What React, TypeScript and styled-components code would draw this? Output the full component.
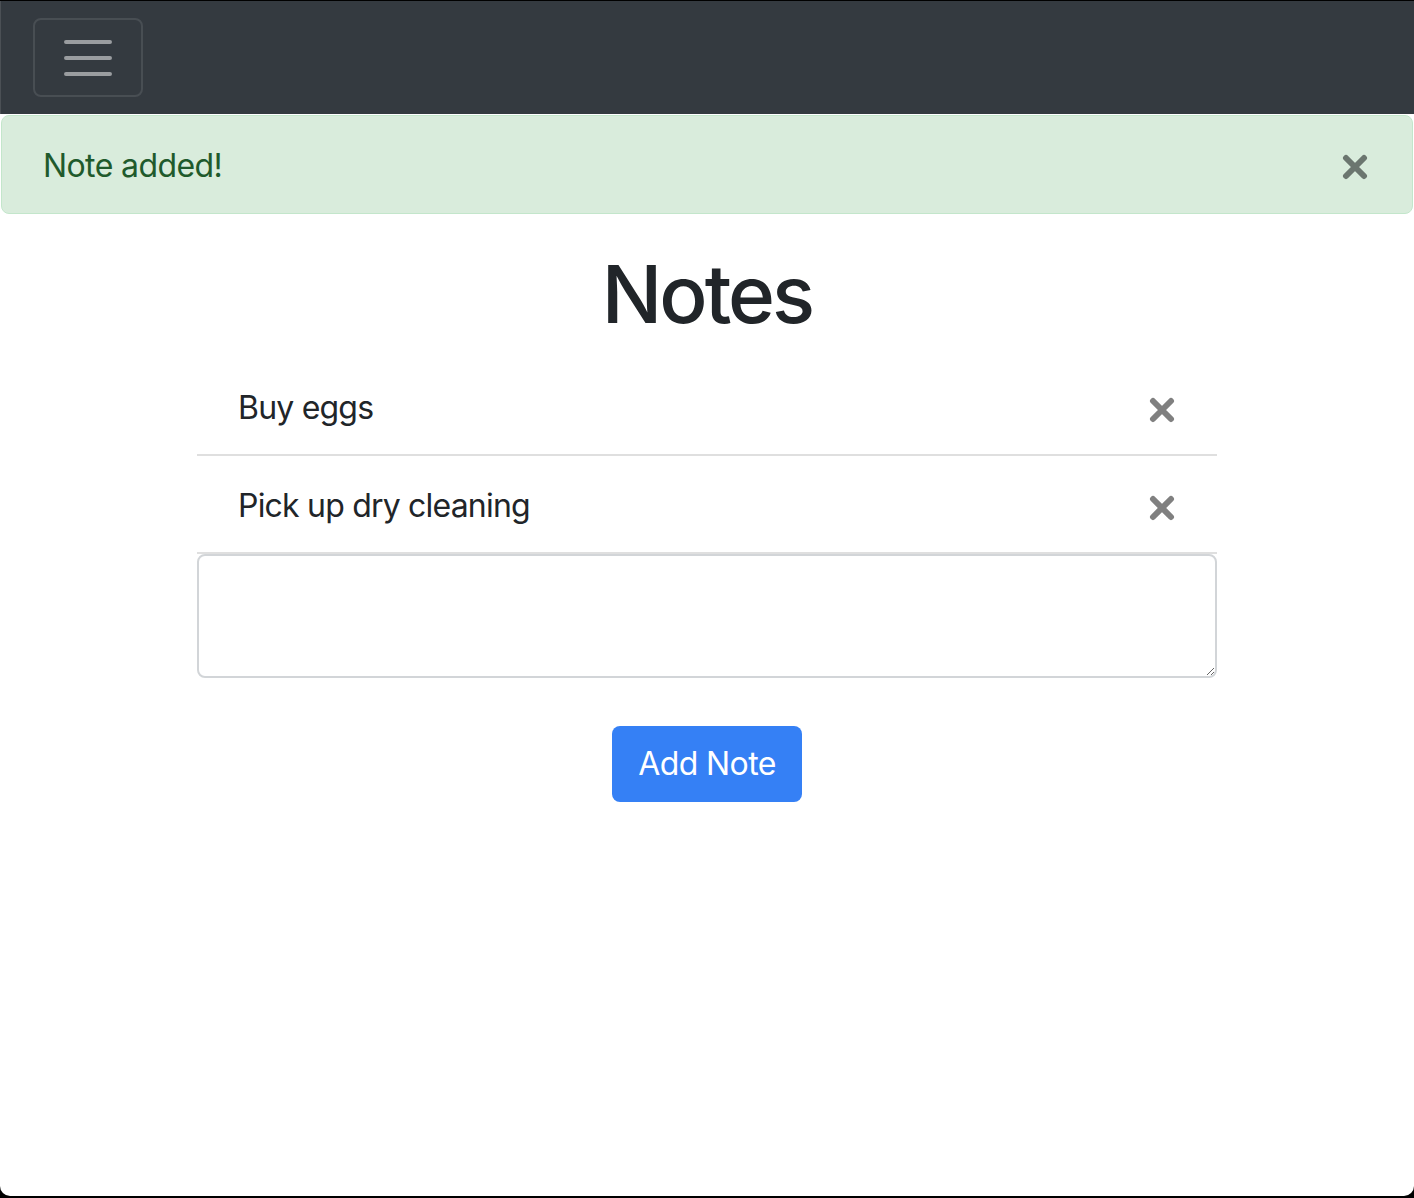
import React from "react";
import styled, { createGlobalStyle } from "styled-components";

const Global = createGlobalStyle`
  html, body { margin: 0; padding: 0; background: #000; }
  body { font-family: Inter, "Noto Sans", "Liberation Sans", sans-serif; color: #212529; }
  * { box-sizing: border-box; }
`;

const Frame = styled.div`
  margin-top: 1px;
  height: 1195px;
  background: #fff;
  border-radius: 0 0 10px 10px;
  overflow: hidden;
  display: flex;
  flex-direction: column;
`;

const Navbar = styled.nav`
  height: 113px;
  background: #343a40;
  border-left: 1px solid #4b5055;
  display: flex;
  align-items: center;
  padding: 0 32px;
`;

const Toggler = styled.button`
  width: 110px;
  height: 79px;
  background: transparent;
  border: 2px solid rgba(255, 255, 255, 0.1);
  border-radius: 8px;
  display: flex;
  align-items: center;
  justify-content: center;
  padding: 0;
  cursor: pointer;
`;

const Alert = styled.div`
  margin: 1px 1px 0 1px;
  height: 99px;
  background: #d9ecdc;
  border: 1px solid #c3e6cb;
  border-radius: 8px;
  color: #1f5a2c;
  display: flex;
  align-items: center;
  justify-content: space-between;
  padding: 3px 44px 0 41px;
  font-size: 32px;
  line-height: 48px;
  letter-spacing: -0.6px;
`;

const CloseBtn = styled.button<{ $tone: string; $shift: number }>`
  background: transparent;
  border: 0;
  padding: 0;
  margin-top: ${(p) => p.$shift}px;
  width: 26px;
  height: 26px;
  display: flex;
  align-items: center;
  justify-content: center;
  color: ${(p) => p.$tone};
  cursor: pointer;
`;

const Container = styled.main`
  width: 1020px;
  margin: 0 auto;
  display: flex;
  flex-direction: column;
`;

const Title = styled.h1`
  margin: 32px 0 16px;
  font-size: 80px;
  line-height: 96px;
  font-weight: 500;
  text-align: center;
  color: #212529;
  letter-spacing: -3px;
`;

const List = styled.ul`
  list-style: none;
  margin: 0;
  padding: 0;
`;

const Item = styled.li`
  display: flex;
  align-items: center;
  justify-content: space-between;
  height: 98px;
  padding: 4px 42px 0 41px;
  border-bottom: 2px solid #dfdfdf;
  font-size: 32px;
  line-height: 48px;
  letter-spacing: -0.8px;
  color: #212529;
`;

const TextArea = styled.textarea`
  display: block;
  width: 100%;
  height: 124px;
  border: 2px solid #d2d5d8;
  border-radius: 8px;
  font-family: inherit;
  font-size: 32px;
  padding: 12px 24px;
  outline: none;
`;

const Actions = styled.div`
  display: flex;
  justify-content: center;
  margin-top: 48px;
`;

const PrimaryButton = styled.button`
  height: 76px;
  padding: 0 26px;
  background: #3580f5;
  color: #fff;
  border: 0;
  border-radius: 8px;
  font-family: inherit;
  font-size: 32px;
  line-height: 48px;
  letter-spacing: -0.6px;
  cursor: pointer;
`;

const Cross = () => (
  <svg width="26" height="26" viewBox="0 0 26 26">
    <path d="M4 4L22 22M22 4L4 22" stroke="currentColor" strokeWidth="6" strokeLinecap="round" />
  </svg>
);

const Hamburger = () => (
  <svg width="60" height="60" viewBox="0 0 30 30">
    <path
      d="M4 7h22M4 15h22M4 23h22"
      stroke="rgba(255,255,255,0.5)"
      strokeWidth="2"
      strokeLinecap="round"
      strokeMiterlimit="10"
    />
  </svg>
);

const notes = ["Buy eggs", "Pick up dry cleaning"];

export default function App() {
  return (
    <>
      <Global />
      <Frame>
        <Navbar>
          <Toggler aria-label="Toggle navigation">
            <Hamburger />
          </Toggler>
        </Navbar>
        <Alert>
          <span>Note added!</span>
          <CloseBtn $tone="#6b766f" $shift={2} aria-label="Close">
            <Cross />
          </CloseBtn>
        </Alert>
        <Container>
          <Title>Notes</Title>
          <List>
            {notes.map((n) => (
              <Item key={n}>
                <span>{n}</span>
                <CloseBtn $tone="#808080" $shift={4} aria-label="Delete">
                  <Cross />
                </CloseBtn>
              </Item>
            ))}
          </List>
          <TextArea />
          <Actions>
            <PrimaryButton>Add Note</PrimaryButton>
          </Actions>
        </Container>
      </Frame>
    </>
  );
}
